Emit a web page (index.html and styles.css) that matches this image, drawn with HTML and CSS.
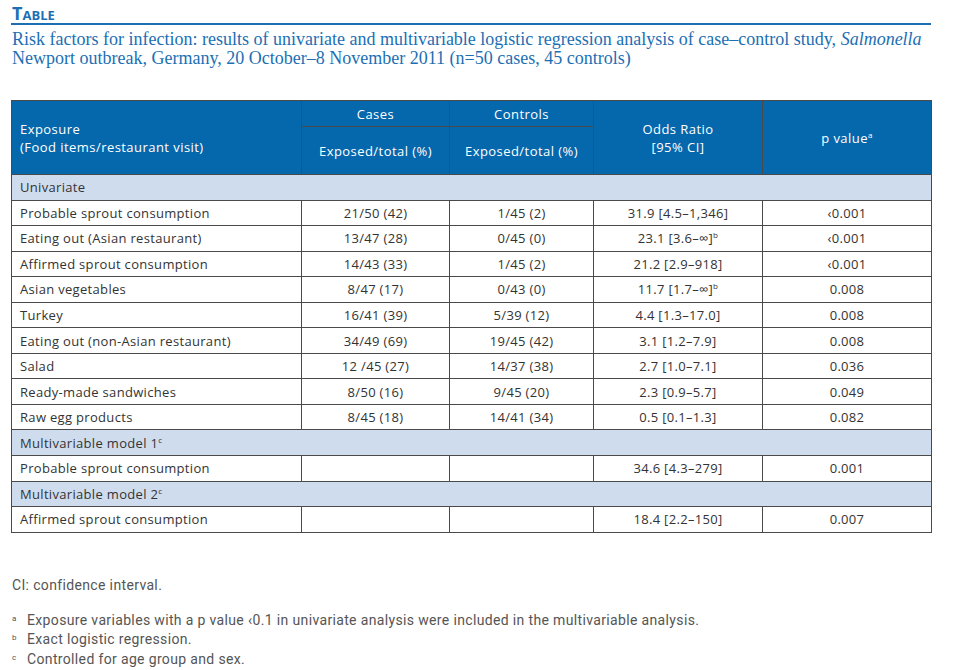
FILE: index.html
```html
<!DOCTYPE html>
<html>
<head>
<meta charset="utf-8">
<link rel="stylesheet" href="styles.css">
</head>
<body>
<div class="page">
  <div class="heading">Table</div>
  <p class="caption">Risk factors for infection: results of univariate and multivariable logistic regression analysis of case–control study, <i>Salmonella</i> Newport outbreak, Germany, 20 October–8 November 2011 (n=50 cases, 45 controls)</p>
  <table class="data">
    <colgroup>
      <col class="c1"><col class="c2"><col class="c3"><col class="c4"><col class="c5">
    </colgroup>
    <thead>
      <tr class="h1">
        <th rowspan="2" class="left">Exposure<br>(Food items/restaurant visit)</th>
        <th>Cases</th>
        <th>Controls</th>
        <th rowspan="2">Odds Ratio<br>[95% CI]</th>
        <th rowspan="2">p value<sup>a</sup></th>
      </tr>
      <tr class="h2">
        <th>Exposed/total (%)</th>
        <th>Exposed/total (%)</th>
      </tr>
    </thead>
    <tbody>
      <tr class="sec"><td colspan="5">Univariate</td></tr>
      <tr><td>Probable sprout consumption</td><td>21/50 (42)</td><td>1/45 (2)</td><td>31.9 [4.5–1,346]</td><td>‹0.001</td></tr>
      <tr><td>Eating out (Asian restaurant)</td><td>13/47 (28)</td><td>0/45 (0)</td><td>23.1 [3.6–∞]<sup>b</sup></td><td>‹0.001</td></tr>
      <tr><td>Affirmed sprout consumption</td><td>14/43 (33)</td><td>1/45 (2)</td><td>21.2 [2.9–918]</td><td>‹0.001</td></tr>
      <tr><td>Asian vegetables</td><td>8/47 (17)</td><td>0/43 (0)</td><td>11.7 [1.7–∞]<sup>b</sup></td><td>0.008</td></tr>
      <tr><td>Turkey</td><td>16/41 (39)</td><td>5/39 (12)</td><td>4.4 [1.3–17.0]</td><td>0.008</td></tr>
      <tr><td>Eating out (non-Asian restaurant)</td><td>34/49 (69)</td><td>19/45 (42)</td><td>3.1 [1.2–7.9]</td><td>0.008</td></tr>
      <tr><td>Salad</td><td>12 /45 (27)</td><td>14/37 (38)</td><td>2.7 [1.0–7.1]</td><td>0.036</td></tr>
      <tr><td>Ready-made sandwiches</td><td>8/50 (16)</td><td>9/45 (20)</td><td>2.3 [0.9–5.7]</td><td>0.049</td></tr>
      <tr><td>Raw egg products</td><td>8/45 (18)</td><td>14/41 (34)</td><td>0.5 [0.1–1.3]</td><td>0.082</td></tr>
      <tr class="sec"><td colspan="5">Multivariable model 1<sup>c</sup></td></tr>
      <tr><td>Probable sprout consumption</td><td></td><td></td><td>34.6 [4.3–279]</td><td>0.001</td></tr>
      <tr class="sec"><td colspan="5">Multivariable model 2<sup>c</sup></td></tr>
      <tr><td>Affirmed sprout consumption</td><td></td><td></td><td>18.4 [2.2–150]</td><td>0.007</td></tr>
    </tbody>
  </table>
  <div class="notes">
    <p class="ci">CI: confidence interval.</p>
    <ul class="fn">
      <li><span class="mark">a</span>Exposure variables with a p value ‹0.1 in univariate analysis were included in the multivariable analysis.</li>
      <li><span class="mark">b</span>Exact logistic regression.</li>
      <li><span class="mark">c</span>Controlled for age group and sex.</li>
    </ul>
  </div>
</div>
</body>
</html>
```
FILE: styles.css
```css
html, body {
  margin: 0;
  padding: 0;
  background: #ffffff;
}
.page {
  width: 920px;
  padding: 5px 0 0 11px;
}
.heading {
  font-family: "Open Sans", "Noto Sans", sans-serif;
  font-weight: 700;
  font-variant: small-caps;
  font-size: 18px;
  line-height: 17px;
  color: #1c6fb3;
  padding-left: 1px;
  padding-bottom: 1px;
  border-bottom: 2px solid #1c6fb3;
}
.caption {
  margin: 5px 0 0 1px;
  font-family: "Liberation Serif", serif;
  font-size: 18px;
  line-height: 19px;
  color: #1c6fb3;
}
.data {
  margin-top: 32px;
  width: 920px;
  border-collapse: collapse;
  table-layout: fixed;
  font-family: "Open Sans", "Noto Sans", sans-serif;
  font-size: 13px;
  letter-spacing: 0.32px;
  color: #333;
}
.c1 { width: 290px; }
.c2 { width: 148px; }
.c3 { width: 144px; }
.c4 { width: 169px; }
.c5 { width: 169px; }
.data th, .data td {
  border: 1px solid #4a4a4a;
  padding: 0 8px;
  text-align: center;
  font-weight: 400;
}
.data th {
  background: #0567ac;
  color: #ffffff;
  letter-spacing: 0.45px;
}
.data th.left, .data td:first-child {
  text-align: left;
}
.h1 th { height: 25px; }
.h2 th { height: 47px; }
.data td { height: 24.55px; }
.data tr.sec td {
  background: #cfdcee;
}
.data sup {
  font-size: 8px;
  vertical-align: 5px;
  line-height: 0;
}
.notes {
  margin-top: 44px;
  font-family: "Roboto", sans-serif;
  font-size: 14px;
  letter-spacing: 0.35px;
  color: #555;
}
.ci {
  margin: 0 0 0 1px;
}
.fn {
  list-style: none;
  margin: 18px 0 0 1px;
  padding: 0;
}
.fn li {
  line-height: 19.5px;
}
.mark {
  display: inline-block;
  width: 15px;
  font-size: 8px;
  vertical-align: 4px;
  line-height: 0;
}
```
